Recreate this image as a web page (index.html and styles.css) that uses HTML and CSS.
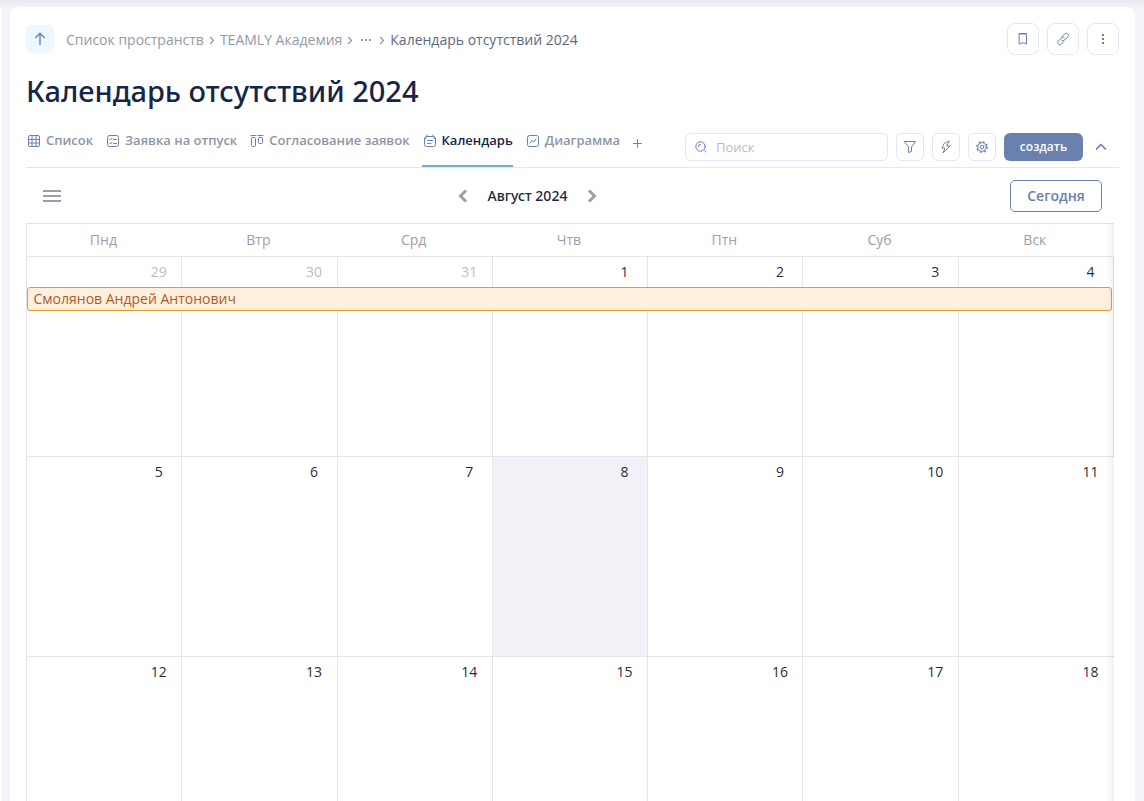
FILE: index.html
```html
<!DOCTYPE html>
<html lang="ru">
<head>
<meta charset="utf-8">
<meta name="viewport" content="width=device-width, initial-scale=1">
<title>Календарь отсутствий 2024</title>
<link rel="stylesheet" href="styles.css">
</head>
<body>
<div class="app">
  <aside class="side-edge"></aside>
  <main class="page">
    <header class="topbar">
      <button class="up-button" aria-label="Наверх">
        <svg class="icon medium" width="16" height="16" viewBox="0 0 16 16"><path d="M8 13.500V2.500M3.800 6.500 8 2.300l4.200 4.200"/></svg>
      </button>
      <nav class="crumbs" aria-label="Путь">
        <a href="#">Список пространств</a>
        <svg class="icon medium" width="8" height="8" viewBox="0 0 8 8"><path d="M2.500 1.500 5.500 4.500 2.500 7.500"/></svg>
        <a href="#">TEAMLY Академия</a>
        <svg class="icon medium" width="8" height="8" viewBox="0 0 8 8"><path d="M2.500 1.500 5.500 4.500 2.500 7.500"/></svg>
        <button class="crumb-more" aria-label="Показать скрытые">
          <svg width="12" height="4" viewBox="0 0 12 4"><path fill="currentColor" d="M1 1h2v2H1zM5 1h2v2H5zM9 1h2v2H9z"/></svg>
        </button>
        <svg class="icon medium" width="8" height="8" viewBox="0 0 8 8"><path d="M2.500 1.500 5.500 4.500 2.500 7.500"/></svg>
        <a class="current" href="#">Календарь отсутствий 2024</a>
      </nav>
      <div class="top-actions">
        <button class="square large" aria-label="В закладки">
          <svg class="icon" width="16" height="16" viewBox="0 0 16 16"><path d="M4.500 2.500h7v10.500L8 11.700 4.500 13z"/><path d="M4.500 3h7"/></svg>
        </button>
        <button class="square large" aria-label="Ссылка">
          <svg class="icon" width="16" height="16" viewBox="0 0 16 16"><path d="M7.300 5.300l2.400-2.400a2 2 0 0 1 3 0 2 2 0 0 1 0 3L9.500 9.200a2 2 0 0 1-3 0M8.700 10.700l-2.400 2.400a2 2 0 0 1-3 0 2 2 0 0 1 0-3l3.200-3.300a2 2 0 0 1 3 0"/></svg>
        </button>
        <button class="square large" aria-label="Ещё">
          <svg width="16" height="16" viewBox="0 0 16 16"><path fill="currentColor" d="M7 3h2v2H7zM7 7h2v2H7zM7 11h2v2H7z"/></svg>
        </button>
      </div>
    </header>

    <h1 class="title">Календарь отсутствий 2024</h1>

    <div class="viewbar">
      <nav class="tabs" aria-label="Представления">
        <a class="tab" href="#"><svg class="icon" width="14" height="14" viewBox="0 0 14 14"><rect x="1.500" y="1.500" width="11" height="11" rx="1.500"/><path d="M1.500 5.500h11M1.500 9h11M5 1.500v11M9 1.500v11"/></svg>Список</a>
        <a class="tab" href="#"><svg class="icon" width="14" height="14" viewBox="0 0 14 14"><rect x="1.500" y="1.500" width="11" height="11" rx="2"/><path d="M3.500 5l1 1L6 4.300M3.500 9l1 1L6 8.300M7.500 5.500h3M7.500 9.500h3"/></svg>Заявка на отпуск</a>
        <a class="tab" href="#"><svg class="icon" width="14" height="14" viewBox="0 0 14 14"><path d="M1 1.500h5M8 1.500h5"/><rect x="1.500" y="3.500" width="4" height="9" rx="1"/><rect x="8.500" y="3.500" width="4" height="6" rx="1"/></svg>Согласование заявок</a>
        <a class="tab active" href="#" aria-current="page"><svg class="icon" width="14" height="14" viewBox="0 0 14 14"><rect x="1.500" y="2.500" width="11" height="10" rx="2"/><path d="M4 1v2M10 1v2M2 4.500h1M11 4.500h1M4.500 6.500h5M4.500 9.500h3.500"/></svg>Календарь</a>
        <a class="tab" href="#"><svg class="icon" width="14" height="14" viewBox="0 0 14 14"><rect x="1.500" y="1.500" width="11" height="11" rx="2"/><path d="M4 9l1.800-2.500L7.800 8 10 5"/></svg>Диаграмма</a>
        <button class="add-tab" aria-label="Добавить представление">
          <svg class="icon" width="10" height="10" viewBox="0 0 10 10"><path d="M5.500 1.500v8M1.500 5.500h8"/></svg>
        </button>
      </nav>
      <div class="tools">
        <label class="search">
          <svg class="icon" width="14" height="14" viewBox="0 0 14 14"><circle cx="6.500" cy="6.500" r="4.700"/><path d="M4.300 6.500a2.200 2.200 0 0 1 2.200-2.200M10.800 11l1.200 1"/></svg>
          <input type="search" placeholder="Поиск" aria-label="Поиск">
        </label>
        <button class="square" aria-label="Фильтр">
          <svg class="icon" width="14" height="14" viewBox="0 0 14 14"><path d="M1.500 1.500h11L8.500 7v4.500l-3 1V7z"/></svg>
        </button>
        <button class="square" aria-label="Автоматизации">
          <svg class="icon" width="14" height="14" viewBox="0 0 14 14"><path d="M10 1 5 3.500 3 8h3L4 13l7-7H8z"/></svg>
        </button>
        <button class="square" aria-label="Настройки">
          <svg class="icon" width="14" height="14" viewBox="0 0 14 14"><circle cx="7" cy="7" r="4.300"/><circle class="teeth" cx="7" cy="7" r="5.200"/><circle cx="7" cy="7" r="1.800"/></svg>
        </button>
        <button class="create">создать</button>
        <button class="collapse" aria-label="Свернуть">
          <svg class="icon thick" width="12" height="12" viewBox="0 0 12 12"><path d="M1.500 8 6 3.500 10.500 8"/></svg>
        </button>
      </div>
    </div>

    <section class="calendar">
      <div class="calendar-head">
        <button class="menu" aria-label="Меню календаря">
          <svg width="18" height="12" viewBox="0 0 18 12"><path fill="currentColor" d="M0 0h18v2H0zM0 5h18v2H0zM0 10h18v2H0z"/></svg>
        </button>
        <div class="month">
          <button class="arrow" aria-label="Предыдущий месяц">
            <svg width="10" height="14" viewBox="0 0 10 14"><path d="M8 1.500 2.500 7 8 12.500"/></svg>
          </button>
          <span class="month-name">Август 2024</span>
          <button class="arrow" aria-label="Следующий месяц">
            <svg width="10" height="14" viewBox="0 0 10 14"><path d="M2 1.500 7.500 7 2 12.500"/></svg>
          </button>
        </div>
        <button class="today-button">Сегодня</button>
      </div>
      <div class="grid-wrap">
        <table class="grid">
          <thead>
            <tr><th>Пнд</th><th>Втр</th><th>Срд</th><th>Чтв</th><th>Птн</th><th>Суб</th><th>Вск</th></tr>
          </thead>
          <tbody>
            <tr><td class="other"><span class="day">29</span><a class="event" href="#">Смолянов Андрей Антонович</a></td><td class="other"><span class="day">30</span></td><td class="other"><span class="day">31</span></td><td><span class="day">1</span></td><td><span class="day">2</span></td><td><span class="day">3</span></td><td><span class="day">4</span></td></tr>
            <tr><td><span class="day">5</span></td><td><span class="day">6</span></td><td><span class="day">7</span></td><td class="today"><span class="day">8</span></td><td><span class="day">9</span></td><td><span class="day">10</span></td><td><span class="day">11</span></td></tr>
            <tr><td><span class="day">12</span></td><td><span class="day">13</span></td><td><span class="day">14</span></td><td><span class="day">15</span></td><td><span class="day">16</span></td><td><span class="day">17</span></td><td><span class="day">18</span></td></tr>
          </tbody>
        </table>
      </div>
    </section>
  </main>
</div>
</body>
</html>
```
FILE: styles.css
```css
* { box-sizing: border-box; }

body {
  margin: 0;
  height: 100vh;
  overflow: hidden;
  background: #f3f4f9;
  font-family: "Open Sans", "Noto Sans", sans-serif;
  font-size: 14px;
  color: #172647;
}

a { color: inherit; text-decoration: none; }

button {
  display: flex;
  align-items: center;
  justify-content: center;
  padding: 0;
  border: 0;
  background: none;
  color: #6a80af;
  font: inherit;
  cursor: pointer;
}

svg { display: block; flex: none; }

.icon { fill: none; stroke: currentColor; stroke-linecap: round; stroke-linejoin: round; }
.medium { stroke-width: 1.4; }
.thick { stroke-width: 1.7; }
.teeth { stroke-dasharray: 2 2.080; stroke-linecap: butt; stroke-width: 1.4; }

.app {
  display: flex;
  gap: 8px;
  height: 100vh;
  padding: 7px 9px 0 0;
  background: linear-gradient(#e9eaef, #f3f4f9 8px);
}

.side-edge { width: 2px; background: #fff; border-top-right-radius: 8px; }

.page {
  flex: 1;
  min-width: 0;
  padding: 16px 16px 0;
  overflow: hidden;
  background: #fff;
  border-radius: 8px 8px 0 0;
}

.topbar { display: flex; align-items: center; gap: 12px; }

.up-button { width: 28px; height: 28px; border-radius: 6px; background: #eff8ff; }

.crumbs { display: flex; flex: 1; align-items: center; gap: 4px; color: #9299a8; line-height: 20px; padding-top: 2px; }
.crumbs .current { color: #5d6880; }
.crumb-more { width: 16px; color: #9299a8; }

.top-actions { display: flex; gap: 8px; }

.square {
  width: 28px;
  height: 28px;
  border: 1px solid #dfe8f5;
  border-radius: 6px;
}
.square.large { width: 32px; height: 32px; border-radius: 8px; }

.title { margin: 16px 0; font-size: 29px; line-height: 40px; font-weight: 500; font-family: "Noto Sans", sans-serif; }

.viewbar {
  display: flex;
  justify-content: space-between;
  border-bottom: 1px solid #dfe8f5;
}

.tabs { display: flex; gap: 12px; }

.tab {
  display: flex;
  gap: 5px;
  height: 40px;
  padding: 4px 0 0 1px;
  font-size: 13px;
  line-height: 18px;
  font-weight: 600;
  color: #8e96a5;
  white-space: nowrap;
}
.tab .icon { margin-top: 3px; color: #6a80af; }
.tab.active { color: #172647; border-bottom: 2px solid #66b5d9; }

.add-tab { width: 10px; height: 32px; }

.tools { display: flex; gap: 8px; padding-top: 6px; height: 40px; align-items: flex-start; }

.search {
  display: flex;
  align-items: center;
  gap: 8px;
  width: 203px;
  height: 28px;
  padding: 0 8px;
  border: 1px solid #dfe8f5;
  border-radius: 6px;
  color: #6a80af;
}
.search input {
  flex: 1;
  min-width: 0;
  padding: 0;
  border: 0;
  outline: 0;
  background: none;
  font: inherit;
  font-size: 13px;
}
.search input::placeholder { color: #b7bdc8; opacity: 1; }

.create { width: 79px; height: 28px; padding-bottom: 2px; border-radius: 6px; background: #6a80af; color: #fff; font-size: 12px; font-weight: 600; }
.collapse { width: 20px; height: 28px; margin-right: 8px; }

.calendar-head {
  display: flex;
  align-items: center;
  justify-content: space-between;
  height: 55px;
  padding: 0 17px;
}
.menu { color: #9d9dad; width: 18px; height: 24px; }

.month { display: flex; align-items: center; gap: 20px; margin-right: 16px; }
.month-name { font-weight: 500; font-family: "Noto Sans", sans-serif; color: #26273a; }
.arrow svg { fill: none; stroke: #9d9dad; stroke-width: 3; }

.today-button {
  width: 92px;
  height: 32px;
  border: 1px solid #6a80af;
  border-radius: 5px;
  font-weight: 600;
}

.grid-wrap { position: relative; margin-right: 5px; overflow: hidden; }
.grid-wrap::after {
  content: "";
  position: absolute;
  inset: 0 0 0 auto;
  width: 8px;
  background: linear-gradient(to right, transparent, #0000000f);
  pointer-events: none;
}

.grid {
  position: relative;
  width: 100%;
  table-layout: fixed;
  border-collapse: collapse;
}
.grid th, .grid td { padding: 0; border: 1px solid #e5e5e5; }
.grid th { height: 33px; padding: 0 2px 2px 0; border-width: 1px 0; font-weight: 400; color: #9d9dad; }
.grid th:first-child { border-left-width: 1px; }
.grid td { height: 200px; padding: 5px 14px; vertical-align: top; text-align: right; line-height: 20px; color: #2c2d3a; }
.grid tr + tr td:last-child { border-right-color: transparent; }
.grid .other { color: #bbbbc8; }
.grid .today { background: #f1f2f7; }

.day { display: inline-block; min-width: 17px; text-align: center; }

.event {
  position: absolute;
  top: 63px;
  left: 0;
  right: 2px;
  height: 24px;
  padding: 0 6px;
  border: 1px solid #e99a2c;
  border-radius: 3px;
  background: #fff0de;
  color: #b05a25;
  line-height: 22px;
  text-align: left;
}
```
